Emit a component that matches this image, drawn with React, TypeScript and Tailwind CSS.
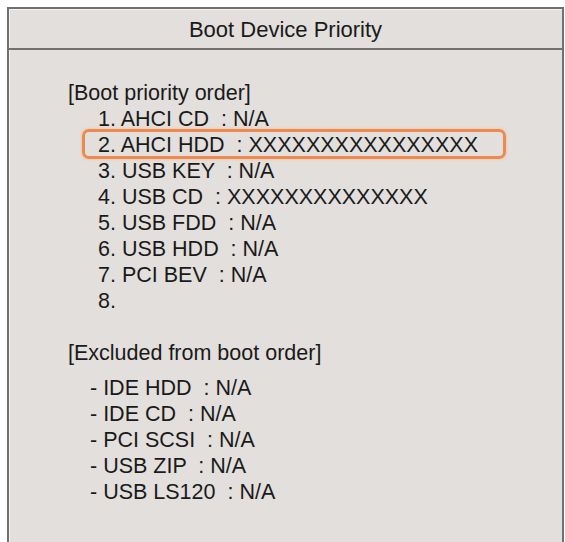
const priority = [
  { label: '1. AHCI CD', value: 'N/A' },
  { label: '2. AHCI HDD', value: 'XXXXXXXXXXXXXXXX', highlight: true },
  { label: '3. USB KEY', value: 'N/A' },
  { label: '4. USB CD', value: 'XXXXXXXXXXXXXX' },
  { label: '5. USB FDD', value: 'N/A' },
  { label: '6. USB HDD', value: 'N/A' },
  { label: '7. PCI BEV', value: 'N/A' },
  { label: '8.', value: '' },
];

const excluded = [
  { label: '- IDE HDD', value: 'N/A' },
  { label: '- IDE CD', value: 'N/A' },
  { label: '- PCI SCSI', value: 'N/A' },
  { label: '- USB ZIP', value: 'N/A' },
  { label: '- USB LS120', value: 'N/A' },
];

function Row({ label, value, highlight }: { label: string; value: string; highlight?: boolean }) {
  return (
    <div className="relative h-[26px] leading-[26px] whitespace-pre">
      {highlight && (
        <div className="absolute -left-[16px] top-[-3px] w-[424px] h-[30px] rounded-[7px] border-[3px] border-[#ef8a4e] shadow-[0_0_3px_#f5b58c]" />
      )}
      {label}
      {value !== '' && <span>{'  : ' + value}</span>}
    </div>
  );
}

export default function App() {
  return (
    <div className="w-[565px] h-[542px] bg-white pt-[7px] pl-[7px] pr-[1px] font-['Liberation_Sans',Arial,sans-serif] text-[#1a1a1a]">
      <div className="h-full flex flex-col bg-[#e2dfdc] border-2 border-b-0 border-[#707070] shadow-[inset_1px_1px_0_#f4f3f1]">
        <div className="h-[41px] flex items-center justify-center border-b-2 border-[#707070] text-[22px] pt-[1px]">
          Boot Device Priority
        </div>
        <div className="pl-[59px] pt-[30px] text-[21.5px]">
          <div className="h-[26px] leading-[26px]">[Boot priority order]</div>
          <div className="pl-[30px]">
            {priority.map((p) => (
              <Row key={p.label} {...p} />
            ))}
          </div>
          <div className="h-[26px] leading-[26px] mt-[26px]">[Excluded from boot order]</div>
          <div className="pl-[22px] pt-[9px]">
            {excluded.map((p) => (
              <Row key={p.label} {...p} />
            ))}
          </div>
        </div>
      </div>
    </div>
  );
}
